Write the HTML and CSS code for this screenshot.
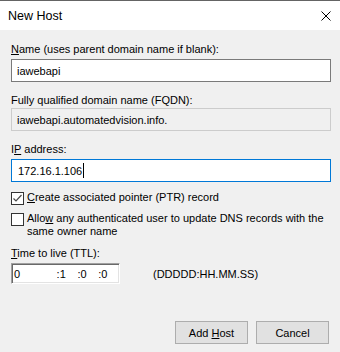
FILE: index.html
```html
<!DOCTYPE html>
<html lang="en">
<head>
    <meta charset="UTF-8">
    <meta name="viewport" content="width=device-width, initial-scale=1.0">
    <title>New Host</title>

    <link rel="stylesheet" href="styles.css">
</head>
<body>
    <div class="dialog">
        <div class="titlebar">
            <span class="title">New Host</span>
            <svg class="close" width="10" height="10" viewBox="0 0 10 10">
                <path d="M0.5 0.5 L9.5 9.5 M9.5 0.5 L0.5 9.5" stroke="#000" stroke-width="1" fill="none"/>
            </svg>
        </div>

        <div class="content">
            <div class="label lbl-name"><u>N</u>ame (uses parent domain name if blank):</div>
            <div class="field">iawebapi</div>

            <div class="label lbl-fqdn">Fully qualified domain name (FQDN):</div>
            <div class="field readonly">iawebapi.automatedvision.info.</div>

            <div class="label lbl-ip">I<u>P</u> address:</div>
            <div class="field focused">172.16.1.106<span class="caret"></span></div>

            <div class="check check-ptr">
                <span class="box">
                    <svg width="11" height="11" viewBox="0 0 11 11">
                        <path d="M1.5 5.5 L4 8 L9.5 2" stroke="#4a4a4a" stroke-width="1.2" fill="none"/>
                    </svg>
                </span>
                <span class="check-text"><u>C</u>reate associated pointer (PTR) record</span>
            </div>

            <div class="check check-any">
                <span class="box"></span>
                <span class="check-text">Allo<u>w</u> any authenticated user to update DNS records with the<br>same owner name</span>
            </div>

            <div class="label lbl-ttl"><u>T</u>ime to live (TTL):</div>
            <div class="ttl-row">
                <div class="ttl-box">
                    <span class="ttl-days">0</span>
                    <span class="ttl-part">:1</span>
                    <span class="ttl-part">:0</span>
                    <span class="ttl-part">:0</span>
                </div>
                <span class="ttl-fmt">(DDDDD:HH.MM.SS)</span>
            </div>

            <div class="buttons">
                <button class="btn">Add <u>H</u>ost</button>
                <button class="btn">Cancel</button>
            </div>
        </div>
    </div>
</body>
</html>
```

FILE: styles.css
```css
* {
    padding: 0;
    margin: 0;
    box-sizing: border-box;
}

body {
    background-color: #f0f0f0;
    font-family: "Liberation Sans", Arial, sans-serif;
    font-size: 11px;
    color: #000;
}

.dialog {
    width: 340px;
    height: 352px;
    border-top: 1px solid #646464;
}

.titlebar {
    display: flex;
    align-items: center;
    justify-content: space-between;
    height: 29px;
    padding: 0 9px 0 8px;
    background-color: #fff;
}

.title {
    font-size: 12.5px;
}

.close {
    display: block;
}

.content {
    padding: 13px 9px 0 11px;
}

.label {
    line-height: 13px;
    height: 13px;
}

.lbl-fqdn {
    margin-top: 12px;
}

.lbl-ip {
    margin-top: 12px;
}

.lbl-ttl {
    margin-top: 9px;
}

.field {
    display: flex;
    align-items: center;
    height: 23px;
    margin-top: 3px;
    padding-left: 5px;
    background-color: #fff;
    border: 1px solid #7a7a7a;
}

.lbl-fqdn + .field {
    margin-top: 1px;
}

.readonly {
    background-color: #f0f0f0;
    border-color: #cccccc;
}

.focused {
    border-color: #0078d7;
    padding-left: 6px;
}

.caret {
    display: inline-block;
    width: 1px;
    height: 15px;
    margin-left: 1px;
    background-color: #000;
}

.check {
    display: flex;
    align-items: flex-start;
    line-height: 13px;
}

.check-ptr {
    margin-top: 9px;
}

.check-any {
    margin-top: 7px;
}

.box {
    flex: none;
    display: flex;
    align-items: center;
    justify-content: center;
    width: 13px;
    height: 13px;
    margin-top: 1px;
    margin-right: 3px;
    background-color: #fff;
    border: 1px solid #333;
}

.ttl-row {
    display: flex;
    align-items: center;
    margin-top: 3px;
}

.ttl-box {
    display: flex;
    align-items: center;
    width: 109px;
    height: 21px;
    padding-left: 2px;
    background-color: #fff;
    border-top: 1px solid #a0a0a0;
    border-left: 1px solid #a0a0a0;
    border-right: 1px solid #fff;
    border-bottom: 1px solid #fff;
    box-shadow: inset 1px 1px 0 #696969, inset -1px -1px 0 #e3e3e3;
}

.ttl-days {
    width: 43px;
}

.ttl-part {
    width: 21px;
}

.ttl-fmt {
    margin-left: 33px;
}

.buttons {
    display: flex;
    justify-content: flex-end;
    gap: 8px;
    margin-top: 37px;
    margin-right: 2px;
}

.btn {
    width: 73px;
    height: 23px;
    font-family: "Liberation Sans", Arial, sans-serif;
    font-size: 11px;
    color: #000;
    background-color: #e1e1e1;
    border: 1px solid #adadad;
}
```
